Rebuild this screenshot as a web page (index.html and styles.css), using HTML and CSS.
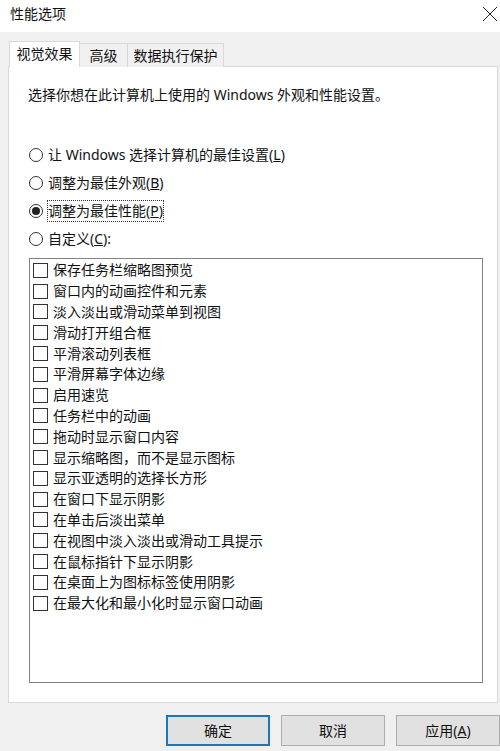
FILE: index.html
```html
<!DOCTYPE html>
<html lang="zh-CN">
<head>
<meta charset="utf-8">
<title>性能选项</title>
<link rel="stylesheet" href="styles.css">
</head>
<body>
<div class="window">
  <div class="titlebar">
    <span class="title">性能选项</span>
    <svg class="close" width="16" height="16" viewBox="0 0 16 16"><path d="M1 1 L15 15 M15 1 L1 15" stroke="#222" stroke-width="1" fill="none"/></svg>
  </div>
  <div class="body">
    <div class="tabs">
      <div class="tab active tab-1">视觉效果</div>
      <div class="tab tab-2">高级</div>
      <div class="tab tab-3">数据执行保护</div>
    </div>
    <div class="panel">
      <p class="desc">选择你想在此计算机上使用的 Windows 外观和性能设置。</p>
      <div class="radios">
        <div class="radio-row"><span class="radio"></span><span class="label">让 Windows 选择计算机的最佳设置(<u>L</u>)</span></div>
        <div class="radio-row"><span class="radio"></span><span class="label">调整为最佳外观(<u>B</u>)</span></div>
        <div class="radio-row"><span class="radio checked"></span><span class="label focus">调整为最佳性能(<u>P</u>)</span></div>
        <div class="radio-row"><span class="radio"></span><span class="label">自定义(<u>C</u>):</span></div>
      </div>
      <div class="listbox">
        <div class="item"><span class="check"></span><span>保存任务栏缩略图预览</span></div>
        <div class="item"><span class="check"></span><span>窗口内的动画控件和元素</span></div>
        <div class="item"><span class="check"></span><span>淡入淡出或滑动菜单到视图</span></div>
        <div class="item"><span class="check"></span><span>滑动打开组合框</span></div>
        <div class="item"><span class="check"></span><span>平滑滚动列表框</span></div>
        <div class="item"><span class="check"></span><span>平滑屏幕字体边缘</span></div>
        <div class="item"><span class="check"></span><span>启用速览</span></div>
        <div class="item"><span class="check"></span><span>任务栏中的动画</span></div>
        <div class="item"><span class="check"></span><span>拖动时显示窗口内容</span></div>
        <div class="item"><span class="check"></span><span>显示缩略图，而不是显示图标</span></div>
        <div class="item"><span class="check"></span><span>显示亚透明的选择长方形</span></div>
        <div class="item"><span class="check"></span><span>在窗口下显示阴影</span></div>
        <div class="item"><span class="check"></span><span>在单击后淡出菜单</span></div>
        <div class="item"><span class="check"></span><span>在视图中淡入淡出或滑动工具提示</span></div>
        <div class="item"><span class="check"></span><span>在鼠标指针下显示阴影</span></div>
        <div class="item"><span class="check"></span><span>在桌面上为图标标签使用阴影</span></div>
        <div class="item"><span class="check"></span><span>在最大化和最小化时显示窗口动画</span></div>
      </div>
    </div>
    <div class="buttons">
      <div class="btn default">确定</div>
      <div class="btn">取消</div>
      <div class="btn">应用(<u>A</u>)</div>
    </div>
  </div>
</div>
</body>
</html>
```

FILE: styles.css
```css
* { box-sizing: border-box; }
html, body { margin: 0; padding: 0; }
body {
  width: 500px;
  height: 751px;
  overflow: hidden;
  background: #f0f0f0;
  font-family: "Noto Sans", "Noto Sans CJK SC", sans-serif;
  font-size: 14px;
  color: #111;
}
.window { width: 500px; height: 751px; display: flex; flex-direction: column; }
.titlebar {
  height: 32px;
  background: #fff;
  display: flex;
  align-items: center;
  justify-content: space-between;
  padding: 0 2px 4px 10px;
}
.title { line-height: 20px; }
.close { display: block; }
.body { display: flex; flex-direction: column; flex: 1; }
.tabs {
  display: flex;
  align-items: flex-end;
  padding: 9px 0 0 9px;
  position: relative;
  z-index: 1;
  margin-bottom: -1px;
}
.tab {
  height: 24px;
  border: 1px solid #d9d9d9;
  border-bottom: none;
  background: #f0f0f0;
  display: flex;
  align-items: center;
  justify-content: center;
  line-height: 20px;
}
.tab + .tab { border-left: none; }
.tab.active {
  height: 26px;
  background: #fff;
  padding-bottom: 2px;
}
.tab-1 { width: 71px; }
.tab-2 { width: 48px; }
.tab-3 { width: 96px; }
.panel {
  margin: 0 2px 0 8px;
  height: 637px;
  background: #fff;
  border: 1px solid #d9d9d9;
  padding: 18px 0 0 19px;
  display: flex;
  flex-direction: column;
}
.desc { margin: 0; line-height: 20px; }
.radios {
  margin-top: 40px;
  display: flex;
  flex-direction: column;
  gap: 8px;
}
.radio-row {
  display: flex;
  align-items: center;
  height: 20px;
  padding-left: 1px;
}
.radio {
  width: 14px;
  height: 14px;
  border: 1px solid #333;
  border-radius: 50%;
  margin-right: 5px;
  display: flex;
  align-items: center;
  justify-content: center;
  flex: none;
}
.radio.checked::after {
  content: "";
  width: 8px;
  height: 8px;
  border-radius: 50%;
  background: #222;
}
.label { line-height: 20px; border: 1px solid transparent; margin-left: -1px; }
.label.focus { border: 1px dotted #333; }
.listbox {
  margin: 9px 0 0 1px;
  width: 454px;
  height: 425px;
  border: 1px solid #828282;
  padding: 1px 0 0 3px;
  display: flex;
  flex-direction: column;
}
.item {
  height: 20.8px;
  display: flex;
  align-items: center;
  line-height: 20px;
}
.check {
  width: 15px;
  height: 15px;
  border: 1px solid #333;
  margin-right: 5px;
  flex: none;
  background: #fff;
}
.buttons {
  display: flex;
  justify-content: flex-end;
  gap: 11px;
  margin-top: 12px;
}
.btn {
  width: 104px;
  height: 31px;
  background: #e1e1e1;
  border: 1px solid #adadad;
  display: flex;
  align-items: center;
  justify-content: center;
  line-height: 20px;
}
.btn.default { border: 2px solid #1a78b8; }
```
